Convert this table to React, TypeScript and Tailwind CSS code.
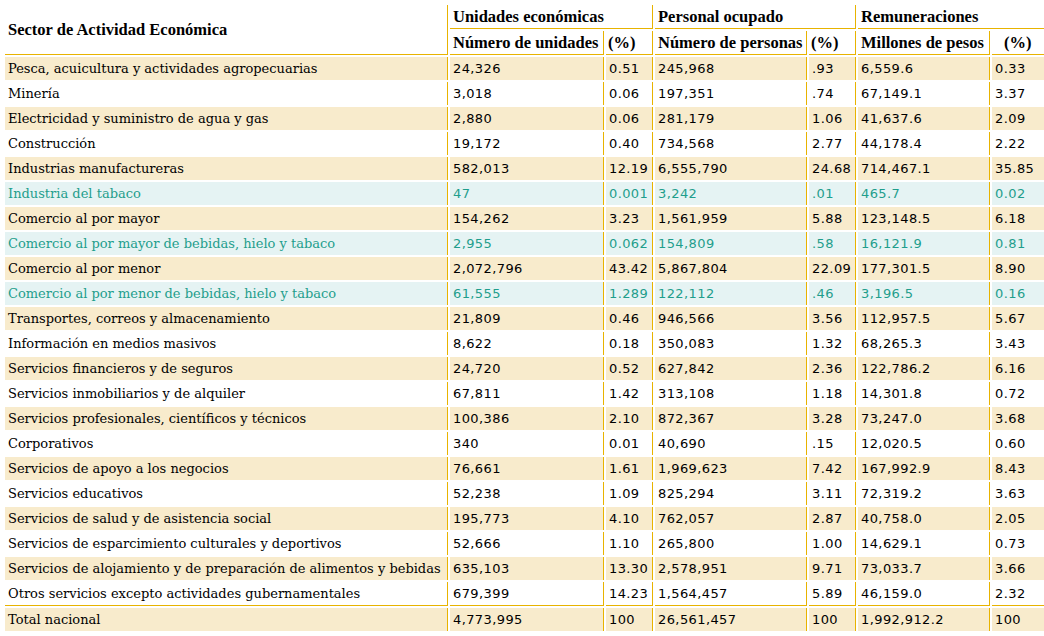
type Row = [string, string, string, string, string, string, string, 'c' | 'w' | 't'];

const rows: Row[] = [
  ['Pesca, acuicultura y actividades agropecuarias', '24,326', '0.51', '245,968', '.93', '6,559.6', '0.33', 'c'],
  ['Minería', '3,018', '0.06', '197,351', '.74', '67,149.1', '3.37', 'w'],
  ['Electricidad y suministro de agua y gas', '2,880', '0.06', '281,179', '1.06', '41,637.6', '2.09', 'c'],
  ['Construcción', '19,172', '0.40', '734,568', '2.77', '44,178.4', '2.22', 'w'],
  ['Industrias manufactureras', '582,013', '12.19', '6,555,790', '24.68', '714,467.1', '35.85', 'c'],
  ['Industria del tabaco', '47', '0.001', '3,242', '.01', '465.7', '0.02', 't'],
  ['Comercio al por mayor', '154,262', '3.23', '1,561,959', '5.88', '123,148.5', '6.18', 'c'],
  ['Comercio al por mayor de bebidas, hielo y tabaco', '2,955', '0.062', '154,809', '.58', '16,121.9', '0.81', 't'],
  ['Comercio al por menor', '2,072,796', '43.42', '5,867,804', '22.09', '177,301.5', '8.90', 'c'],
  ['Comercio al por menor de bebidas, hielo y tabaco', '61,555', '1.289', '122,112', '.46', '3,196.5', '0.16', 't'],
  ['Transportes, correos y almacenamiento', '21,809', '0.46', '946,566', '3.56', '112,957.5', '5.67', 'c'],
  ['Información en medios masivos', '8,622', '0.18', '350,083', '1.32', '68,265.3', '3.43', 'w'],
  ['Servicios financieros y de seguros', '24,720', '0.52', '627,842', '2.36', '122,786.2', '6.16', 'c'],
  ['Servicios inmobiliarios y de alquiler', '67,811', '1.42', '313,108', '1.18', '14,301.8', '0.72', 'w'],
  ['Servicios profesionales, científicos y técnicos', '100,386', '2.10', '872,367', '3.28', '73,247.0', '3.68', 'c'],
  ['Corporativos', '340', '0.01', '40,690', '.15', '12,020.5', '0.60', 'w'],
  ['Servicios de apoyo a los negocios', '76,661', '1.61', '1,969,623', '7.42', '167,992.9', '8.43', 'c'],
  ['Servicios educativos', '52,238', '1.09', '825,294', '3.11', '72,319.2', '3.63', 'w'],
  ['Servicios de salud y de asistencia social', '195,773', '4.10', '762,057', '2.87', '40,758.0', '2.05', 'c'],
  ['Servicios de esparcimiento culturales y deportivos', '52,666', '1.10', '265,800', '1.00', '14,629.1', '0.73', 'w'],
  ['Servicios de alojamiento y de preparación de alimentos y bebidas', '635,103', '13.30', '2,578,951', '9.71', '73,033.7', '3.66', 'c'],
  ['Otros servicios excepto actividades gubernamentales', '679,399', '14.23', '1,564,457', '5.89', '46,159.0', '2.32', 'w'],
  ['Total nacional', '4,773,995', '100', '26,561,457', '100', '1,992,912.2', '100', 'c'],
];

const rowBg = {
  c: 'bg-[#f8ebcc] text-black',
  w: 'bg-white text-black',
  t: 'bg-[#e5f3f3] text-[#1f9e8c]',
};

const head =
  "font-['Liberation_Serif',serif] font-bold text-[16.5px] leading-[18px] text-black text-left align-middle whitespace-nowrap px-[3px] py-0 border-[#e8b300]";

export default function App() {
  return (
    <div className="w-[1044px] h-[636px] overflow-hidden bg-white">
      <table className="ml-[3px] mt-[3px] w-[1049px] table-fixed border-separate border-spacing-[2px]">
        <colgroup>
          <col className="w-[443px]" />
          <col className="w-[154px]" />
          <col className="w-[47px]" />
          <col className="w-[152px]" />
          <col className="w-[47px]" />
          <col className="w-[132px]" />
          <col className="w-[58px]" />
        </colgroup>
        <thead>
          <tr className="h-[24px]">
            <th rowSpan={2} className={`${head} border-r border-b`}>
              Sector de Actividad Económica
            </th>
            <th colSpan={2} className={`${head} border-r border-b`}>
              Unidades económicas
            </th>
            <th colSpan={2} className={`${head} border-r border-b`}>
              Personal ocupado
            </th>
            <th colSpan={2} className={`${head} border-b`}>
              Remuneraciones
            </th>
          </tr>
          <tr className="h-[24px]">
            <th className={`${head} border-r border-b`}>Número de unidades</th>
            <th className={`${head} border-r border-b pl-[2px]`}>(%)</th>
            <th className={`${head} border-r border-b`}>Número de personas</th>
            <th className={`${head} border-r border-b pl-[2px]`}>(%)</th>
            <th className={`${head} border-r border-b`}>Millones de pesos</th>
            <th className={`${head} border-b pl-[12px]`}>(%)</th>
          </tr>
        </thead>
        <tbody>
          {rows.map((r, i) => {
            const last = i === rows.length - 2;
            const bb = last ? 'border-b' : '';
            return (
              <tr key={r[0]} className={last ? 'h-[24px]' : 'h-[23px]'}>
                <td
                  className={`${rowBg[r[7]]} ${bb} border-r border-[#e8b300] px-[3px] py-0 align-middle whitespace-nowrap font-['DejaVu_Serif',serif] text-[13px] leading-[16px]`}
                >
                  {r[0]}
                </td>
                {r.slice(1, 7).map((v, j) => (
                  <td
                    key={j}
                    className={`${rowBg[r[7]]} ${bb} ${j < 5 ? 'border-r' : ''} border-[#e8b300] px-[3px] py-0 align-middle whitespace-nowrap font-['DejaVu_Sans',sans-serif] text-[13px] tracking-[0.4px] leading-[16px]`}
                  >
                    {v}
                  </td>
                ))}
              </tr>
            );
          })}
        </tbody>
      </table>
    </div>
  );
}
